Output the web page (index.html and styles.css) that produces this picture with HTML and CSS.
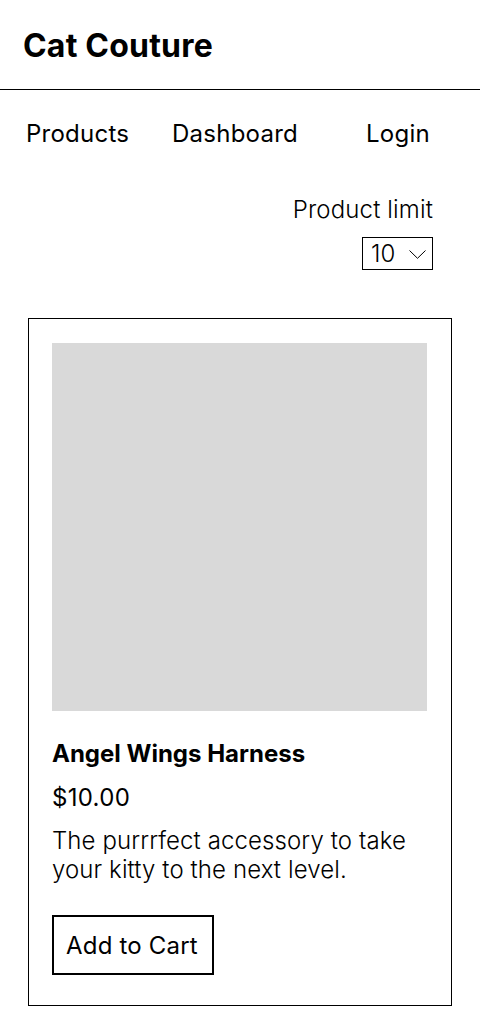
FILE: index.html
```html
<!DOCTYPE html>
<html>
<head>
<meta charset="utf-8">
<link rel="stylesheet" href="styles.css">
</head>
<body>
<header class="site-header">
  <h1 class="brand">Cat Couture</h1>
</header>
<nav class="nav">
  <a class="nav-link" href="#">Products</a>
  <a class="nav-link" href="#">Dashboard</a>
  <a class="nav-link" href="#">Login</a>
</nav>
<section class="limit">
  <label class="limit-label">Product limit</label>
  <div class="select">
    <span class="select-value">10</span>
    <svg class="chevron" width="17" height="9" viewBox="0 0 17 9"><path d="M0.5 0.5 L8.5 8.3 L16.5 0.5" fill="none" stroke="#000" stroke-width="1"/></svg>
  </div>
</section>
<main class="products">
  <article class="card">
    <div class="card-image"></div>
    <h2 class="card-title">Angel Wings Harness</h2>
    <p class="card-price">$10.00</p>
    <p class="card-desc">The purrrfect accessory to take your kitty to the next level.</p>
    <button class="card-btn">Add to Cart</button>
  </article>
</main>
</body>
</html>
```
FILE: styles.css
```css
* { box-sizing: border-box; }
html, body { margin: 0; padding: 0; background: #fff; }
body { font-family: Inter, "Noto Sans", sans-serif; color: #000; }

.site-header {
  height: 90px;
  border-bottom: 1px solid #000;
  padding: 26px 23px 0 23px;
}
.brand {
  margin: 0;
  font-size: 32px;
  font-weight: 700;
  line-height: 40px;
  letter-spacing: 0.2px;
}

.nav {
  display: grid;
  grid-template-columns: 146px 194px auto;
  padding: 28px 24px 0 26px;
}
.nav-link {
  font-size: 24px;
  font-weight: 400;
  color: #000;
  text-decoration: none;
  line-height: 32px;
  letter-spacing: 0.25px;
}

.limit {
  display: flex;
  flex-direction: column;
  align-items: flex-end;
  padding: 46px 47px 0 0;
}
.limit-label {
  font-size: 24px;
  font-weight: 300;
  line-height: 28px;
  letter-spacing: 0.15px;
}
.select {
  margin-top: 13px;
  width: 71px;
  height: 33px;
  border: 1px solid #000;
  display: flex;
  align-items: center;
  justify-content: space-between;
  padding: 0 6px 0 8px;
}
.select-value {
  font-size: 24px;
  font-weight: 300;
  line-height: 31px;
}
.chevron { display: block; margin-top: 2px; }

.products { padding: 48px 28px 0 28px; }
.card {
  border: 1px solid #000;
  padding: 24px 24px 30px 23px;
}
.card-image {
  height: 368px;
  width: 375px;
  background: #d9d9d9;
}
.card-title {
  margin: 28px 0 0 0;
  font-size: 24px;
  font-weight: 700;
  line-height: 30px;
}
.card-price {
  margin: 14px 0 0 0;
  font-size: 24px;
  font-weight: 400;
  line-height: 30px;
  letter-spacing: 0.3px;
}
.card-desc {
  margin: 13px 0 0 0;
  font-size: 24px;
  font-weight: 300;
  line-height: 29px;
  letter-spacing: 0.1px;
}
.card-btn {
  display: block;
  margin-top: 31px;
  height: 60px;
  padding: 0 14px 0 12px;
  border: 2px solid #000;
  background: #fff;
  font-family: Inter, "Noto Sans", sans-serif;
  font-size: 24px;
  font-weight: 400;
  color: #000;
  letter-spacing: 0.2px;
}
```
